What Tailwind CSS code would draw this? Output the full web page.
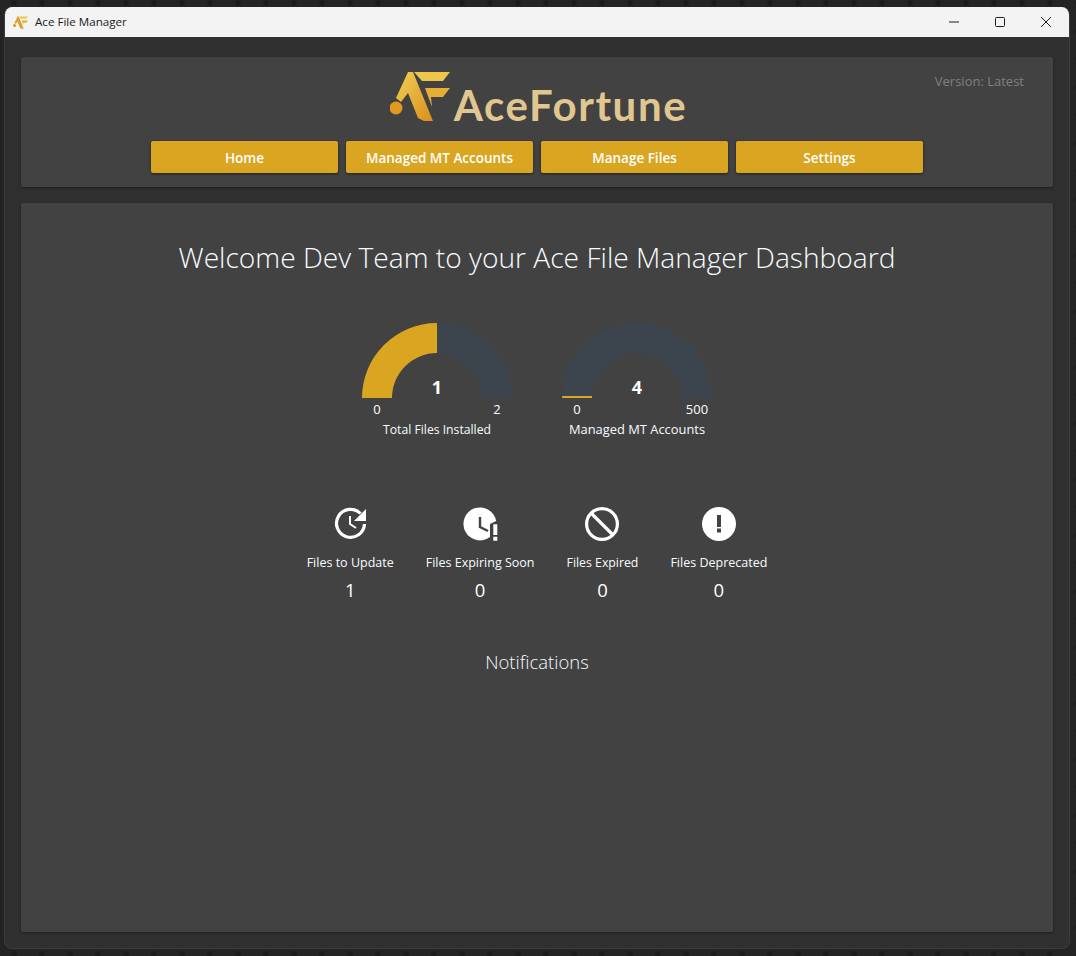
<!doctype html>
<html lang="en">
<head>
<meta charset="utf-8">
<title>Ace File Manager</title>
<script src="https://cdn.jsdelivr.net/npm/@tailwindcss/browser@4"></script>
</head>
<body class="m-0 h-[956px] w-[1076px] overflow-hidden bg-[#242424] bg-[radial-gradient(circle,#1b1b1b_2px,transparent_4px)] bg-[length:28px_28px] bg-[position:0_-11px] pl-[4px] pt-[7px] font-['Open_Sans','Noto_Sans',sans-serif]">
<div class="flex h-[942px] w-[1066px] flex-col overflow-hidden rounded-lg border border-[#3c3c3c] border-t-0 bg-[#303030]">
  <div class="flex h-[30px] shrink-0 items-center justify-between bg-[#f3f3f3] pl-2">
    <div class="flex items-center gap-[7px]">
      <svg class="h-[15px] w-[15px]" viewBox="0 0 60 50"><path d="M18 1H23L43 50H34L28 47L18 22L11 31L6 27Z" fill="#e0a030"/><path d="M23 1H60L53 10H31Z" fill="#eec64c"/><path d="M35 17H60L53 26H41L42 36Z" fill="#e5ae35"/><circle cx="6" cy="37" r="6" fill="#e09020"/></svg>
      <span class="text-[11.6px] leading-none text-[#1a1a1a]">Ace File Manager</span>
    </div>
    <div class="flex items-center">
      <div class="flex h-[30px] w-[46px] items-center justify-center"><svg class="h-[10px] w-[10px]" viewBox="0 0 10 10"><path d="M0 5H10" stroke="#1a1a1a"/></svg></div>
      <div class="flex h-[30px] w-[46px] items-center justify-center"><svg class="h-[10px] w-[10px]" viewBox="0 0 10 10"><rect x=".5" y=".5" width="9" height="9" rx="1" fill="none" stroke="#1a1a1a"/></svg></div>
      <div class="flex h-[30px] w-[46px] items-center justify-center"><svg class="h-[10px] w-[10px]" viewBox="0 0 10 10"><path d="M0 0L10 10M10 0L0 10" stroke="#1a1a1a"/></svg></div>
    </div>
  </div>
  <div class="flex flex-1 flex-col gap-4 px-4 pb-4 pt-5">
    <header class="relative flex h-[130px] shrink-0 flex-col items-center rounded-[2px] bg-[#424242] pt-[12px] shadow-[0_1px_3px_rgba(0,0,0,0.4)]">
      <span class="absolute right-[29px] top-[14px] text-[13px] leading-[20px] text-[#808080]">Version: Latest</span>
      <div class="flex h-[60px] items-end gap-[4px] pl-[3px]">
        <svg class="mb-[8px] h-[50px] w-[60px]" viewBox="0 0 60 50">
          <defs>
            <linearGradient id="g1" x1="0" y1="0" x2="1" y2="1"><stop offset="0" stop-color="#f2cf55"/><stop offset="1" stop-color="#d98f1c"/></linearGradient>
          </defs>
          <path d="M18 1H23L43 50H34L28 47L18 22L11 31L6 27Z" fill="url(#g1)"/>
          <path d="M24 1H60L53 10H32Z" fill="#eec64c"/>
          <path d="M35 17H60L53 26H41L42 36Z" fill="#e5ae35"/>
          <circle cx="6" cy="37" r="6.500" fill="#e0991f"/>
        </svg>
        <span class="font-['Lato',sans-serif] text-[42px] font-bold leading-[48px] tracking-[1.6px] text-[#e0c78f]">AceFortune</span>
      </div>
      <nav class="mt-[12px] flex gap-2">
        <button class="h-8 w-[187px] rounded-[2px] bg-[#daa520] pt-[2px] text-[13.5px] font-semibold text-white shadow-[0_1px_3px_rgba(0,0,0,0.5)]">Home</button>
        <button class="h-8 w-[187px] rounded-[2px] bg-[#daa520] pt-[2px] text-[13.5px] font-semibold text-white shadow-[0_1px_3px_rgba(0,0,0,0.5)]">Managed MT Accounts</button>
        <button class="h-8 w-[187px] rounded-[2px] bg-[#daa520] pt-[2px] text-[13.5px] font-semibold text-white shadow-[0_1px_3px_rgba(0,0,0,0.5)]">Manage Files</button>
        <button class="h-8 w-[187px] rounded-[2px] bg-[#daa520] pt-[2px] text-[13.5px] font-semibold text-white shadow-[0_1px_3px_rgba(0,0,0,0.5)]">Settings</button>
      </nav>
    </header>
    <main class="flex flex-1 flex-col items-center rounded-[2px] bg-[#424242] pt-[33px] text-white shadow-[0_1px_3px_rgba(0,0,0,0.4)]">
      <h1 class="text-[28.15px] font-light leading-[42px] text-[#f8fcff]">Welcome Dev Team to your Ace File Manager Dashboard</h1>
      <div class="mt-[45px] flex h-[115px] gap-[40px]">
        <div class="flex w-[160px] flex-col items-center">
          <div class="relative h-[75px] w-[150px]">
            <svg class="h-[75px] w-[150px]" viewBox="0 0 150 75"><path d="M0 75A75 75 0 0 1 150 75H120A45 45 0 0 0 30 75Z" fill="#3c444e"/><path d="M0 75A75 75 0 0 1 75 0V30A45 45 0 0 0 30 75Z" fill="#daa520"/></svg>
            <span class="absolute inset-x-0 bottom-[1px] text-center text-[18px] font-bold leading-[20px]">1</span>
          </div>
          <div class="mt-[3px] flex w-[150px] justify-between text-[13px] leading-[17px]"><span class="w-[30px] text-center">0</span><span class="w-[30px] text-center">2</span></div>
          <span class="mt-[4px] text-[12.2px] leading-[16px] text-[#f8fcff]">Total Files Installed</span>
        </div>
        <div class="flex w-[160px] flex-col items-center">
          <div class="relative h-[75px] w-[150px]">
            <svg class="h-[75px] w-[150px]" viewBox="0 0 150 75"><path d="M0 75A75 75 0 0 1 150 75H120A45 45 0 0 0 30 75Z" fill="#3c444e"/><path d="M0 75A75 75 0 0 1 0.1 73H30.1A45 45 0 0 0 30 75Z" fill="#daa520"/></svg>
            <span class="absolute inset-x-0 bottom-[1px] text-center text-[18px] font-bold leading-[20px]">4</span>
          </div>
          <div class="mt-[3px] flex w-[150px] justify-between text-[13px] leading-[17px]"><span class="w-[30px] text-center">0</span><span class="w-[30px] text-center">500</span></div>
          <span class="mt-[3px] text-[12.9px] leading-[16px] whitespace-nowrap text-[#f8fcff]">Managed MT Accounts</span>
        </div>
      </div>
      <div class="mt-[69px] flex gap-8">
        <div class="flex flex-col items-center">
          <svg class="h-[34px] w-[34px]" viewBox="-1 0 34 34" fill="none" stroke="#fff" stroke-width="3.200"><path d="M26.500 6.500A14 14 0 1 0 30.500 17"/><path d="M32 2V14H20Z" fill="#fff" stroke="none"/><path d="M16 9V17L22 21" stroke-width="2"/></svg>
          <span class="mt-[14px] text-[12.5px] leading-[16px] text-[#f8fcff]">Files to Update</span>
          <span class="mt-[7px] text-[18.5px] leading-[24px]">1</span>
        </div>
        <div class="flex flex-col items-center">
          <svg class="h-[34px] w-[36px]" viewBox="-1 0 36 34"><path d="M33.200 14L27 17V30A16.500 16.500 0 1 1 33.200 14Z" fill="#fff"/><path d="M17 10V20L25 24" fill="none" stroke="#424242" stroke-width="2.400"/><path d="M30.300 17.300H34.300V28H30.300ZM30.300 29.700H34.300V33.700H30.300Z" fill="#fff"/></svg>
          <span class="mt-[14px] text-[12.5px] leading-[16px] text-[#f8fcff]">Files Expiring Soon</span>
          <span class="mt-[7px] text-[18.5px] leading-[24px]">0</span>
        </div>
        <div class="flex flex-col items-center">
          <svg class="h-[34px] w-[34px]" viewBox="0 0 34 34" fill="none" stroke="#fff" stroke-width="3.200"><circle cx="17" cy="17" r="15.400"/><path d="M6 6L28 28"/></svg>
          <span class="mt-[14px] text-[12.3px] leading-[16px] text-[#f8fcff]">Files Expired</span>
          <span class="mt-[7px] text-[18.5px] leading-[24px]">0</span>
        </div>
        <div class="flex flex-col items-center">
          <svg class="h-[34px] w-[34px]" viewBox="0 0 34 34"><circle cx="17" cy="17" r="17" fill="#fff"/><path d="M15 8H19V20H15ZM15 21.500H19V25.500H15Z" fill="#424242"/></svg>
          <span class="mt-[14px] text-[12.5px] leading-[16px] text-[#f8fcff]">Files Deprecated</span>
          <span class="mt-[7px] text-[18.5px] leading-[24px]">0</span>
        </div>
      </div>
      <h2 class="mt-[46px] text-[18.5px] font-light leading-[28px] text-[#f4fbff]">Notifications</h2>
    </main>
  </div>
</div>
</body>
</html>
